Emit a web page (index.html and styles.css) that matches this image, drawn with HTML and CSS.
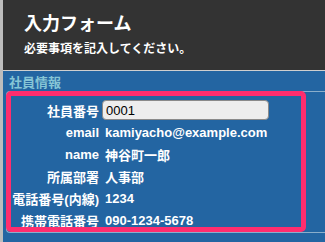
FILE: index.html
```html
<!DOCTYPE html>
<html lang="ja">
<head>
    <meta charset="UTF-8">
    <title>入力フォーム</title>
    <link rel="stylesheet" href="styles.css">
</head>
<body>
    <div class="page">
        <header class="hero">
            <h1>入力フォーム</h1>
            <p>必要事項を記入してください。</p>
        </header>

        <section class="group">
            <h2 class="group-title">社員情報</h2>
            <div class="fieldset">
                <div class="highlight"></div>
                <dl class="rows">
                    <dt>社員番号</dt>
                    <dd><input type="text" class="text-input" value="0001"></dd>
                    <dt>email</dt>
                    <dd>kamiyacho@example.com</dd>
                    <dt>name</dt>
                    <dd>神谷町一郎</dd>
                    <dt>所属部署</dt>
                    <dd>人事部</dd>
                    <dt>電話番号(内線)</dt>
                    <dd>1234</dd>
                    <dt>携帯電話番号</dt>
                    <dd>090-1234-5678</dd>
                </dl>
            </div>
        </section>
    </div>
</body>
</html>
```

FILE: styles.css
```css
body {
    margin: 0;
    background: #2365a2;
    font-family: 'Liberation Sans', 'Noto Sans CJK JP', sans-serif;
    color: white;
    overflow: hidden;
}
.page {
    border-left: 3px solid #bdbdbd;
    min-height: 100vh;
}
.hero {
    background: #333;
    height: 71px;
    box-sizing: border-box;
    padding: 13px 0 0 21px;
    border-bottom: 1px solid #cfcfcf;
}
.hero h1 {
    margin: 0;
    font-size: 18px;
    line-height: 22px;
    font-weight: bold;
}
.hero p {
    margin: 6px 0 0;
    font-size: 12px;
    line-height: 16px;
    font-weight: bold;
}
.group {
    padding-top: 4px;
}
.group-title {
    margin: 0 0 0 6px;
    font-size: 13px;
    line-height: 16px;
    color: #86c5d6;
}
.fieldset {
    position: relative;
    margin-left: 3px;
    height: 140px;
    border: 1px solid #8aaecb;
    border-right: none;
    border-radius: 4px 0 0 4px;
}
.highlight {
    position: absolute;
    left: -1px;
    top: -1px;
    width: 300px;
    height: 141px;
    box-sizing: border-box;
    border: 5px solid #ff2d6e;
    border-radius: 5px;
}
.rows {
    display: grid;
    grid-template-columns: 89px 1fr;
    grid-auto-rows: 22px;
    column-gap: 6px;
    align-items: center;
    margin: 0;
    padding: 7px 0 0 3px;
    font-size: 13px;
    font-weight: bold;
}
.rows dt {
    text-align: right;
    white-space: nowrap;
}
.rows dd {
    margin: 0;
    white-space: nowrap;
}
.text-input {
    width: 167px;
    height: 20px;
    box-sizing: border-box;
    margin-left: -3px;
    padding: 0 3px;
    border: 1px solid #8a8a8a;
    border-radius: 4px;
    background: #ededed;
    font-family: 'Liberation Sans', sans-serif;
    font-size: 13px;
    color: black;
}
```
